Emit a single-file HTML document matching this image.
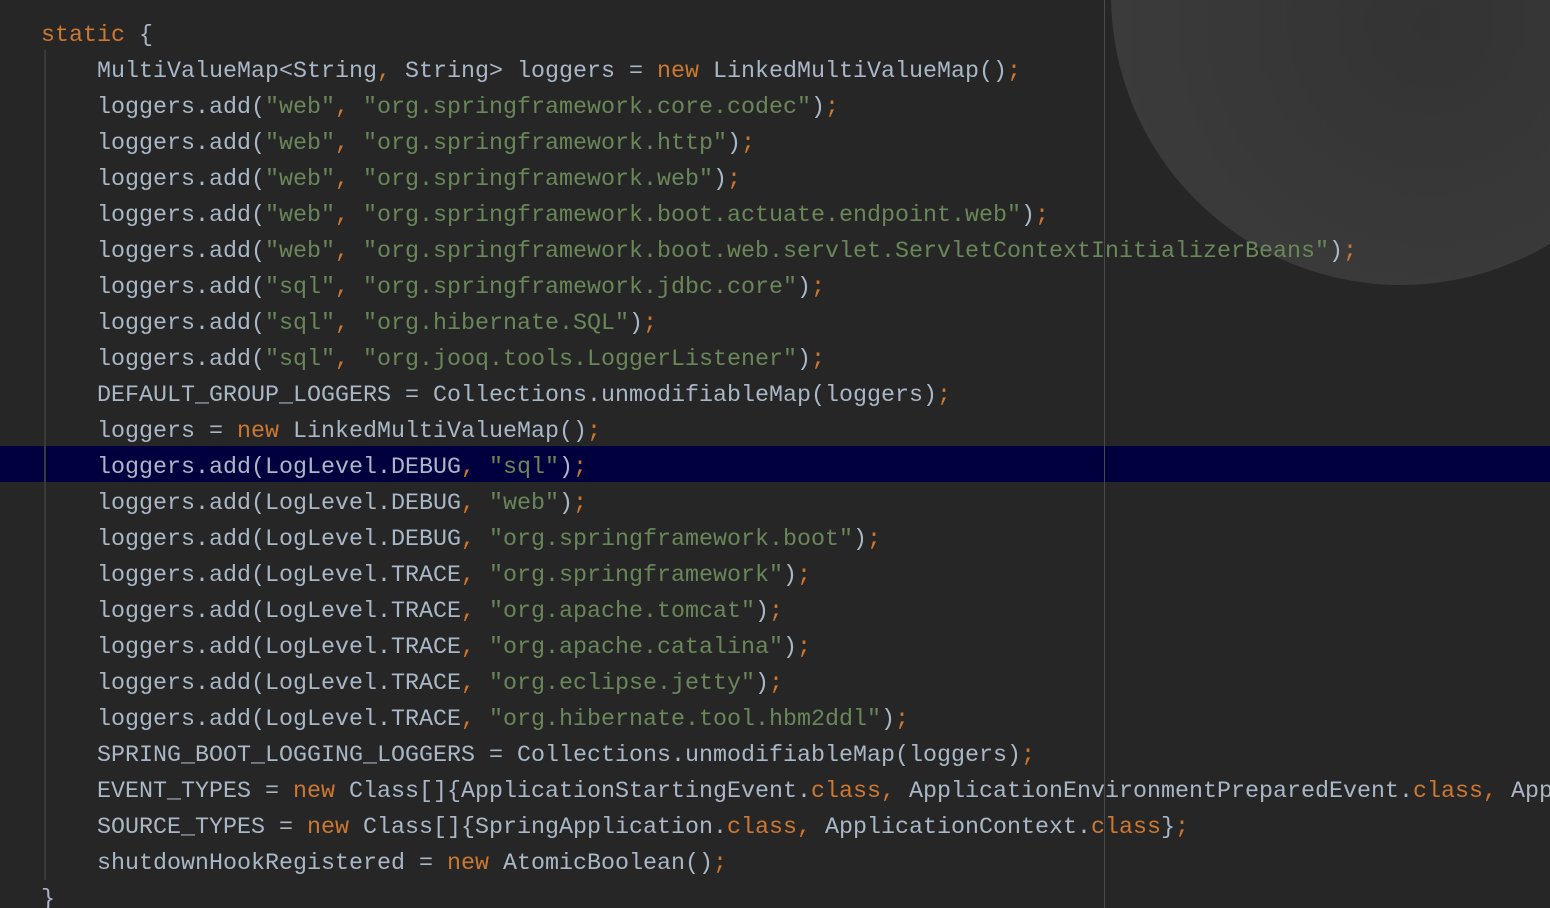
<!DOCTYPE html>
<html><head><meta charset="utf-8"><style>
html,body{margin:0;padding:0;background:#262626;width:1550px;height:908px;overflow:hidden;position:relative}
.moon{position:absolute;left:1111px;top:-295px;width:580px;height:580px;border-radius:50%;background:radial-gradient(circle at 55% 55%,#333 0%,#373737 35%,#3b3b3b 70%,#393939 100%)}
.hl{position:absolute;left:0;top:446px;width:1550px;height:36px;background:#00003e}
.vl{position:absolute;left:1104px;top:0;width:1px;height:908px;background:#4a4a4a}
.ig{position:absolute;left:44px;top:50px;width:2px;height:830px;background:#3a3a3a}
pre{position:absolute;left:41px;top:18px;width:1509px;overflow:hidden;margin:0;font-family:"Liberation Mono",monospace;font-size:23.33px;line-height:36px;color:#a9b7c6;white-space:pre}
.k{color:#cc7832}.s{color:#6a8759}
</style></head><body>
<div class="moon"></div><div class="hl"></div><div class="vl"></div><div class="ig"></div>
<pre><span class="k">static</span> {
    MultiValueMap&lt;String<span class="k">,</span> String&gt; loggers = <span class="k">new</span> LinkedMultiValueMap()<span class="k">;</span>
    loggers.add(<span class="s">"web"</span><span class="k">,</span> <span class="s">"org.springframework.core.codec"</span>)<span class="k">;</span>
    loggers.add(<span class="s">"web"</span><span class="k">,</span> <span class="s">"org.springframework.http"</span>)<span class="k">;</span>
    loggers.add(<span class="s">"web"</span><span class="k">,</span> <span class="s">"org.springframework.web"</span>)<span class="k">;</span>
    loggers.add(<span class="s">"web"</span><span class="k">,</span> <span class="s">"org.springframework.boot.actuate.endpoint.web"</span>)<span class="k">;</span>
    loggers.add(<span class="s">"web"</span><span class="k">,</span> <span class="s">"org.springframework.boot.web.servlet.ServletContextInitializerBeans"</span>)<span class="k">;</span>
    loggers.add(<span class="s">"sql"</span><span class="k">,</span> <span class="s">"org.springframework.jdbc.core"</span>)<span class="k">;</span>
    loggers.add(<span class="s">"sql"</span><span class="k">,</span> <span class="s">"org.hibernate.SQL"</span>)<span class="k">;</span>
    loggers.add(<span class="s">"sql"</span><span class="k">,</span> <span class="s">"org.jooq.tools.LoggerListener"</span>)<span class="k">;</span>
    DEFAULT_GROUP_LOGGERS = Collections.unmodifiableMap(loggers)<span class="k">;</span>
    loggers = <span class="k">new</span> LinkedMultiValueMap()<span class="k">;</span>
    loggers.add(LogLevel.DEBUG<span class="k">,</span> <span class="s">"sql"</span>)<span class="k">;</span>
    loggers.add(LogLevel.DEBUG<span class="k">,</span> <span class="s">"web"</span>)<span class="k">;</span>
    loggers.add(LogLevel.DEBUG<span class="k">,</span> <span class="s">"org.springframework.boot"</span>)<span class="k">;</span>
    loggers.add(LogLevel.TRACE<span class="k">,</span> <span class="s">"org.springframework"</span>)<span class="k">;</span>
    loggers.add(LogLevel.TRACE<span class="k">,</span> <span class="s">"org.apache.tomcat"</span>)<span class="k">;</span>
    loggers.add(LogLevel.TRACE<span class="k">,</span> <span class="s">"org.apache.catalina"</span>)<span class="k">;</span>
    loggers.add(LogLevel.TRACE<span class="k">,</span> <span class="s">"org.eclipse.jetty"</span>)<span class="k">;</span>
    loggers.add(LogLevel.TRACE<span class="k">,</span> <span class="s">"org.hibernate.tool.hbm2ddl"</span>)<span class="k">;</span>
    SPRING_BOOT_LOGGING_LOGGERS = Collections.unmodifiableMap(loggers)<span class="k">;</span>
    EVENT_TYPES = <span class="k">new</span> Class[]{ApplicationStartingEvent.<span class="k">class,</span> ApplicationEnvironmentPreparedEvent.<span class="k">class,</span> App
    SOURCE_TYPES = <span class="k">new</span> Class[]{SpringApplication.<span class="k">class,</span> ApplicationContext.<span class="k">class</span>}<span class="k">;</span>
    shutdownHookRegistered = <span class="k">new</span> AtomicBoolean()<span class="k">;</span>
}</pre>
</body></html>
